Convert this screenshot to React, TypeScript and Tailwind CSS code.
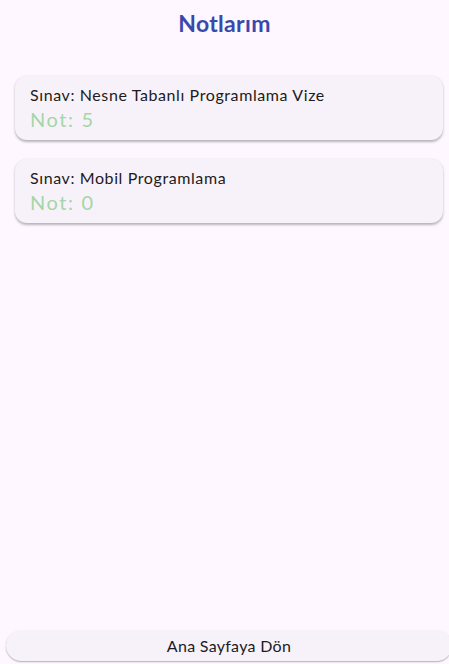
const notes = [
  { exam: "Nesne Tabanlı Programlama Vize", grade: 5 },
  { exam: "Mobil Programlama", grade: 0 },
];

function NoteCard({ exam, grade }: { exam: string; grade: number }) {
  return (
    <div className="h-[64px] rounded-[12px] bg-[#f7f2fa] px-[15px] pt-[8px] shadow-[0_1.5px_2.5px_rgba(0,0,0,0.28)]">
      <div className="text-[16px] leading-[22px] tracking-[0.6px] text-[#1d1b20]">
        Sınav: {exam}
      </div>
      <div className="text-[20px] leading-[26px] font-normal tracking-[1.6px] text-[#a5d6a7]">
        Not: {grade}
      </div>
    </div>
  );
}

export default function App() {
  return (
    <div
      className="relative flex h-[664px] w-[449px] flex-col overflow-hidden bg-[#fef7ff]"
      style={{ fontFamily: "Lato, 'Noto Sans', sans-serif" }}
    >
      <h1 className="pt-[9px] text-center text-[23px] leading-[28px] font-bold tracking-[0.3px] text-[#3949ab]">
        Notlarım
      </h1>
      <div className="mt-[39px] flex flex-col gap-[19px] pl-[15px] pr-[6px]">
        {notes.map((n) => (
          <NoteCard key={n.exam} exam={n.exam} grade={n.grade} />
        ))}
      </div>
      <div className="mt-auto mb-[3px] ml-[6px] w-[446px] shrink-0">
        <button className="h-[31px] w-full rounded-full bg-[#f7f2fa] text-[16px] tracking-[0.3px] text-[#1d1b20] shadow-[0_1px_1.5px_rgba(0,0,0,0.3)]">
          Ana Sayfaya Dön
        </button>
      </div>
    </div>
  );
}
